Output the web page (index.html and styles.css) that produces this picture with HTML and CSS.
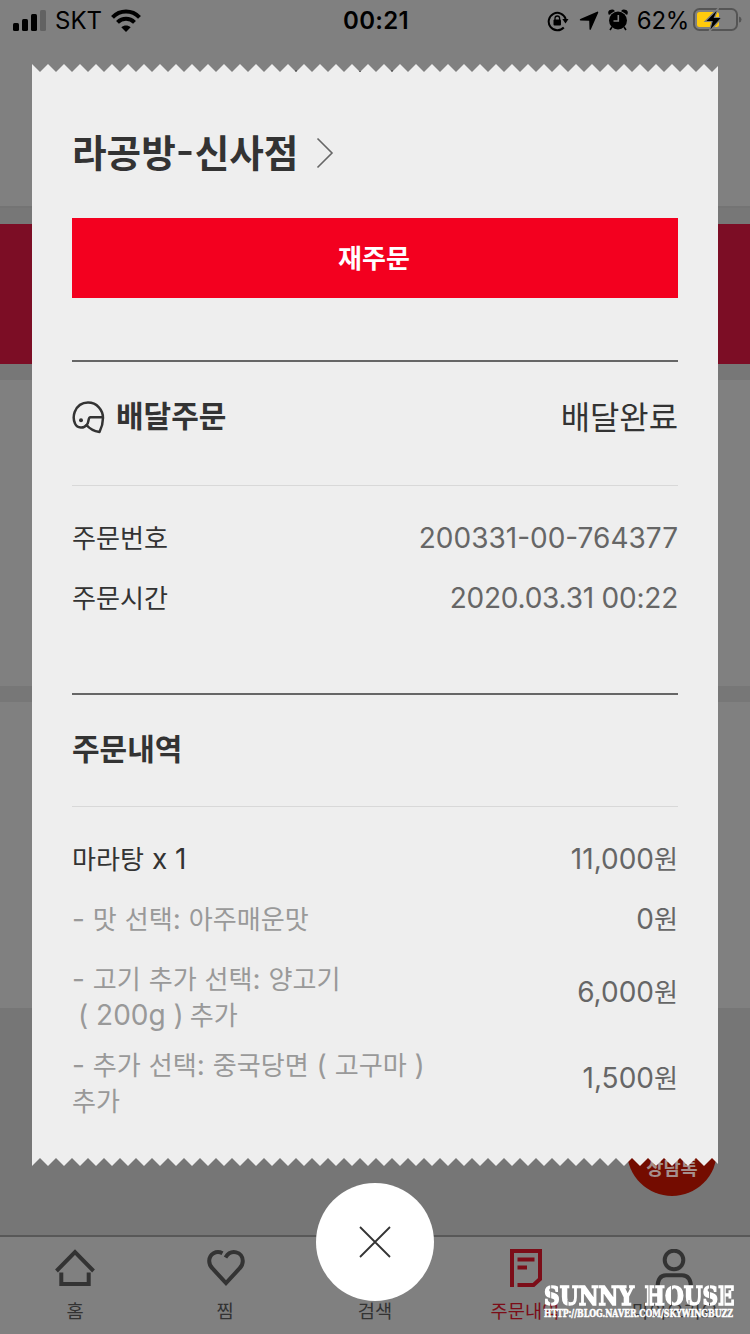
FILE: index.html
```html
<!DOCTYPE html>
<html lang="ko">
<head>
<meta charset="utf-8">
<title>주문내역</title>
<link rel="stylesheet" href="styles.css">
</head>
<body>
<div class="screen">
  <div class="page">
    <div class="band head"></div>
    <div class="band gap"></div>
    <div class="band promo"></div>
    <div class="band gap"></div>
    <div class="band card"></div>
    <div class="band gap"></div>
    <div class="band card"></div>
    <div class="band rest"></div>
    <nav class="tabs">
      <div class="tab">
        <svg width="40" height="40" viewBox="0 0 40 40"><path d="M1.500 22 20 3 38.500 22M6.300 23.500V35H33.700V23.500" class="ink"/></svg>
        <span>홈</span>
      </div>
      <div class="tab">
        <svg width="40" height="40" viewBox="0 0 40 40"><path d="M17.500 4.200C11.500 1 4.200 4.700 4.200 12c0 3.500 1.300 5.500 3.300 7.500L21 34 34.500 19.500c2-2 3.300-4 3.300-7.500 0-9.300-11.800-12.500-17.300-3.500" class="ink"/></svg>
        <span>찜</span>
      </div>
      <div class="tab">
        <svg width="40" height="40" viewBox="0 0 40 40"><circle cx="18" cy="16" r="12" class="ink"/></svg>
        <span>검색</span>
      </div>
      <div class="tab active">
        <svg width="40" height="40" viewBox="0 0 40 40"><path d="M7 38V2H35V30L28.500 36H12.500M12.500 10.500H29.500M12.500 18.500H22" class="ink"/></svg>
        <span>주문내역</span>
      </div>
      <div class="tab">
        <svg width="40" height="40" viewBox="0 0 40 40"><circle cx="19" cy="11" r="9.300" class="ink"/><path d="M2.500 39C2.500 31 5 26.300 11 26.300H27C33 26.300 36 31 36 39" class="ink"/></svg>
        <span>마이요기요</span>
      </div>
    </nav>
  </div>

  <div class="fab">상담톡</div>

  <div class="overlay">
    <header class="status">
      <div class="carrier">
        <svg width="34" height="24" viewBox="0 0 34 24"><rect x="0" y="15" width="6" height="8" rx="1.500"/><rect x="9" y="11" width="6" height="12" rx="1.500"/><rect x="18" y="6" width="6" height="17" rx="1.500"/><rect x="27" y="2" width="6" height="21" rx="1.500" fill="#626262"/></svg>
        <span class="skt">SKT</span>
        <svg width="30" height="24" viewBox="0 0 30 24"><g fill="none" stroke="#000" stroke-width="4"><path d="M1.500 9.300C9 1.500 21 1.500 28.500 9.300"/><path d="M6.500 14.300C11.300 9.500 18.700 9.500 23.500 14.300"/></g><path d="M15 24 10.300 19.300C13 16.800 17 16.800 19.700 19.300Z"/></svg>
      </div>
      <div class="clock">00:21</div>
      <div class="indicators">
        <svg width="22" height="22" viewBox="0 0 22 22"><path d="M16.800 17.500A8.700 8.700 0 1 1 18.700 9" fill="none" stroke="#000" stroke-width="2"/><path d="M15.300 9H21.500L18.500 13.500Z"/><rect x="6.500" y="9.500" width="7.500" height="6" rx="1"/><path d="M8 10V8.300a2.300 2.300 0 0 1 4.600 0V10" fill="none" stroke="#000" stroke-width="1.300"/></svg>
        <svg class="arrow" width="20" height="20" viewBox="0 0 20 20"><path d="M18.700.6Q19.500.9 19.200 1.700L11.800 18.600Q11 19.600 10.500 18.300L10.200 9.800 1.500 9.500Q0 9 1.300 8Z"/></svg>
        <svg class="alarm" width="20" height="22" viewBox="0 0 20 22"><circle cx="10" cy="11.500" r="9"/><path d="M1.500 5.500Q0 2 3 1.500T6 2.500M18.500 5.500Q20 2 17 1.500T14 2.500M4 18 2 21M16 18 18 21" stroke="#000" stroke-width="1.600"/><path d="M10.300 6V12H5.500" fill="none" stroke="#808080" stroke-width="1.600"/></svg>
        <span class="percent">62%</span>
        <svg class="battery" width="50" height="26" viewBox="0 0 50 26"><rect x="1" y="2" width="43" height="21" rx="5.500" fill="none" stroke="#555" stroke-width="2"/><rect x="4" y="5" width="22" height="15" rx="2.500" fill="#ffca0c"/><path d="M46 9.500Q48.500 10 48.500 12.500T46 15.500Z" fill="#555"/><path d="M25.500 1 12 14.500H19L16 25 29 10.500H21.500Z" fill="#000" stroke="#808080" stroke-width="1.200"/></svg>
      </div>
    </header>

    <main class="receipt">
      <svg class="zigzag" width="686" height="8"><defs><pattern id="top" width="16" height="8" patternUnits="userSpaceOnUse"><path d="M0 0 8 8 16 0V8H0Z" fill="#eee"/></pattern></defs><rect width="686" height="8" fill="url(#top)"/><path d="M263 6.500h2l-1 1.500zM327 7h2l-1 1zM359 6.500h2l-1 1.500z" fill="#222"/></svg>
      <div class="paper">
        <h1 class="store"><span>라공방<span class="hy"></span>신사점</span>
          <svg width="18" height="32" viewBox="0 0 18 32"><path d="M1.500 1.500 16 16 1.500 30.500" fill="none" stroke="#666" stroke-width="1.600"/></svg>
        </h1>
        <button class="reorder">재주문</button>
        <section class="block">
          <div class="title">
            <div class="kind">
              <svg width="34" height="34" viewBox="0 0 34 34"><g fill="none" stroke="#333" stroke-width="2.500" stroke-linejoin="round"><path d="M14.500 24C12 27.500 5.500 27.800 3 22.500 1.700 19.500 1.400 14.500 2.700 11 5.500 4 11 1.600 16 1.600 25 1.600 31 9 31 17 31 22 29.500 27 27.500 31 22.500 30.200 18 28.300 14.500 24 17.500 22 15.500 16.300 18.500 16.300H31"/></g><circle cx="9" cy="19.300" r="2" fill="#333"/></svg>
              <b>배달주문</b>
            </div>
            <span class="state">배달완료</span>
          </div>
          <dl class="facts">
            <div class="row"><dt>주문번호</dt><dd class="num">200331-00-764377</dd></div>
            <div class="row"><dt>주문시간</dt><dd class="num order-time">2020.03.31 00:22</dd></div>
          </dl>
        </section>
        <section class="block">
          <div class="title short"><b>주문내역</b></div>
          <div class="items">
            <div class="row"><div><span class="k">마라탕</span> x 1</div><div class="price">11,000<span class="k">원</span></div></div>
            <div class="row option"><div>- <span class="k">맛</span> <span class="k">선택</span>: <span class="k">아주매운맛</span></div><div class="price">0<span class="k">원</span></div></div>
            <div class="row option two"><div class="label">- <span class="k">고기</span> <span class="k">추가</span> <span class="k">선택</span>: <span class="k">양고기</span><br><span class="in">(</span> 200g )<span class="k near">추가</span></div><div class="price">6,000<span class="k">원</span></div></div>
            <div class="row option two"><div class="label">- <span class="k">추가</span> <span class="k">선택</span>: <span class="k">중국당면</span> ( <span class="k">고구마</span> )<br><span class="k">추가</span></div><div class="price">1,500<span class="k">원</span></div></div>
          </div>
        </section>
      </div>
      <svg class="zigzag" width="686" height="8"><defs><pattern id="bottom" width="16" height="8" patternUnits="userSpaceOnUse"><path d="M0 0H16V8L8 0 0 8Z" fill="#eee"/></pattern></defs><rect width="686" height="8" fill="url(#bottom)"/></svg>
    </main>

    <button class="close" aria-label="닫기"><svg width="32" height="32" viewBox="0 0 32 32"><path d="M1 1 31 31M31 1 1 31" stroke="#333" stroke-width="1.800"/></svg></button>
  </div>

  <svg class="watermark" width="200" height="44" viewBox="0 0 200 44">
    <defs><mask id="stencil" maskUnits="userSpaceOnUse" x="0" y="0" width="200" height="44"><rect width="200" height="44" fill="#fff" stroke="none"/><path d="M10.700 0V28M28 20V28M109 0V28M131.500 0V28M149 20V28M169.500 0V28M184 0V28" stroke="#000" stroke-width=".9"/></mask></defs>
    <g mask="url(#stencil)">
      <text x="4" y="24.500" class="wm-name" textLength="90" lengthAdjust="spacingAndGlyphs">SUNNY</text>
      <text x="104.500" y="24.500" class="wm-name" textLength="90" lengthAdjust="spacingAndGlyphs">HOUSE</text>
    </g>
    <text x="4" y="36.500" class="wm-url" textLength="189" lengthAdjust="spacingAndGlyphs">HTTP://BLOG.NAVER.COM/SKYWINGBUZZ</text>
  </svg>
</div>
</body>
</html>
```
FILE: styles.css
```css
* { box-sizing: border-box; margin: 0; padding: 0; }
body { background: #808080; font-family: Inter, "Noto Sans CJK KR", sans-serif; color: #333; }
button { border: 0; font: inherit; }
svg { display: block; flex: none; }
.screen { position: relative; width: 750px; height: 1334px; overflow: hidden; }

.page { display: flex; flex-direction: column; height: 1334px; background: #808080; }
.band { flex: none; }
.head { height: 208px; border-bottom: 2px solid #747474; }
.gap { height: 16px; background: #777; }
.promo { height: 140px; background: #7c0d25; }
.card { height: 306px; background: #808080; }
.rest { flex: 1; background: #767676; }
.tabs { flex: none; display: grid; grid-template-columns: repeat(5, 1fr); height: 99px; background: #808080; border-top: 2px solid #585858; padding-top: 12px; }
.tab { display: flex; flex-direction: column; align-items: center; font: 18.700px/28px "Noto Sans CJK KR", sans-serif; white-space: nowrap; gap: 7px; }
.tab .ink { fill: none; stroke: #333; stroke-width: 4; }
.active { color: #7c0d18; }
.active .ink { stroke: #7c0d18; }

.fab { position: absolute; left: 627px; top: 1106px; width: 90px; height: 90px; border-radius: 50%; background: #740c00; color: #a58f8c; font: bold 18.700px/28px "Noto Sans CJK KR", sans-serif; text-align: center; padding-top: 47px; }

.overlay { position: absolute; inset: 0; display: flex; flex-direction: column; align-items: center; }
.status { align-self: stretch; height: 64px; display: grid; grid-template-columns: 1fr auto 1fr; color: #000; font-size: 24px; line-height: 40px; padding: 1px 11px 0 13px; }
.carrier, .indicators { display: flex; align-items: center; height: 40px; }
.carrier svg { margin-top: -3px; }
.skt { margin: 0 9px 0 8px; }
.clock { font-weight: 600; letter-spacing: .3px; }
.indicators { justify-content: flex-end; }
.indicators svg { margin-top: -1px; }
.indicators .arrow { margin-left: 10px; }
.indicators .alarm { margin: -3px 0 0 9px; }
.percent { margin-left: 9px; letter-spacing: -.3px; }
.indicators .battery { margin-left: 4px; margin-top: -2px; margin-right: -4px; }

.receipt { width: 686px; }
.paper { height: 1086px; padding: 0 40px; background: #eee; display: flex; flex-direction: column; }
.store { display: flex; align-items: center; gap: 18px; height: 146px; padding-top: 16px; font: bold 37.600px/60px "Noto Sans CJK KR", sans-serif; }
.store > span { margin-top: -4px; }
.hy { display: inline-block; width: 19px; text-align: center; }
.hy::before { content: "-"; display: inline-block; transform: scaleX(1.250); }
.reorder { flex: none; height: 80px; background: #f3001f; color: #fff; font: bold 26px/78px "Noto Sans CJK KR", sans-serif; padding: 0 2px 2px 0; }
.block { border-top: 2px solid #666; margin-top: 62px; }
.title { height: 124px; display: flex; justify-content: space-between; align-items: flex-start; padding-top: 31px; border-bottom: 1px solid #d8d8d8; font: 30px/44px "Noto Sans CJK KR", sans-serif; }
.short { height: 112px; }
.kind { display: flex; gap: 10px; align-items: center; }
.kind svg { margin-top: 6px; }
.kind b { margin-top: -1px; }
.short b { margin-top: -1px; }
.state { font-size: 31.900px; }
.facts { padding-top: 22px; height: 145px; }
.row { display: flex; justify-content: space-between; align-items: center; min-height: 60px; font-size: 28px; line-height: 36px; color: #333; }
dt { font: 26.100px/36px "Noto Sans CJK KR", sans-serif; margin-top: -3px; }
.num, .price { color: #666; }
.order-time { letter-spacing: -.22px; }
.items { padding-top: 22px; }
.option { color: #999; }
.two { min-height: 86px; }
.label { padding-top: 10px; }
.k { font-family: "Noto Sans CJK KR", sans-serif; font-size: 26.100px; line-height: 1; }
.in { padding-left: 6px; }
.near { padding-left: 6px; }
.close { flex: none; width: 118px; height: 118px; margin-top: 17px; border-radius: 50%; background: #fff; display: grid; place-items: center; }

.watermark { position: absolute; left: 540px; top: 1280px; fill: #fff; font-family: "DejaVu Serif", serif; font-weight: bold; }
.wm-name { font-size: 26.500px; stroke: #fff; stroke-width: 1.500px; }
.wm-url { font-size: 10.500px; stroke: #fff; stroke-width: .5px; }
```
